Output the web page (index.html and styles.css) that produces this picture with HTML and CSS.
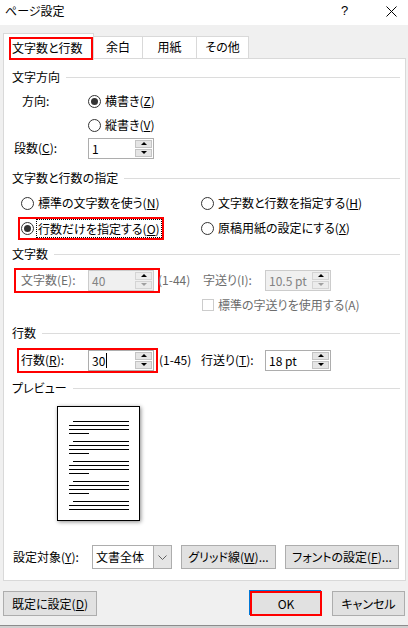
FILE: index.html
```html
<!DOCTYPE html>
<html lang="ja">
<head>
<meta charset="utf-8">
<title>ページ設定</title>
<link rel="stylesheet" href="styles.css">
</head>
<body>
<div class="titlebar">
  <span class="title">ページ設定</span>
  <span class="help">?</span>
  <svg class="close" width="11" height="11" viewBox="0 0 11 11"><path d="M0.5 0.5L10.5 10.5M10.5 0.5L0.5 10.5" stroke="#000" stroke-width="1" fill="none"/></svg>
</div>

<div class="tabs">
  <div class="tab active"><span class="tab-mark">文字数と行数</span></div>
  <div class="tab t2">余白</div>
  <div class="tab t3">用紙</div>
  <div class="tab t4">その他</div>
</div>

<div class="panel">
  <div class="hdr">文字方向</div>
  <div class="row r-dir">
    <span class="lbl w66">方向:</span>
    <span class="opt"><span class="radio on"></span><span>横書き(<u>Z</u>)</span></span>
  </div>
  <div class="row r-vert">
    <span class="opt"><span class="radio"></span><span>縦書き(<u>V</u>)</span></span>
  </div>
  <div class="row r-cols">
    <span class="lbl w74">段数(<u>C</u>):</span>
    <div class="spin"><span class="val">1</span><span class="btns"><span class="sb"><i class="up"></i></span><span class="sb"><i class="dn"></i></span></span></div>
  </div>

  <div class="hdr s2">文字数と行数の指定</div>
  <div class="row r-grid first">
    <span class="col opt"><span class="radio"></span><span>標準の文字数を使う(<u>N</u>)</span></span>
    <span class="opt"><span class="radio"></span><span>文字数と行数を指定する(<u>H</u>)</span></span>
  </div>
  <div class="row r-grid second">
    <span class="col"><span class="mark-radio opt"><span class="radio on"></span><span class="focus">行数だけを指定する(<u>O</u>)</span></span></span>
    <span class="opt"><span class="radio"></span><span>原稿用紙の設定にする(<u>X</u>)</span></span>
  </div>

  <div class="hdr s3">文字数</div>
  <div class="row r-chars">
    <div class="mark mark-chars">
      <span class="lbl dis w67">文字数(E):</span>
      <div class="spin disabled"><span class="val">40</span><span class="btns"><span class="sb"><i class="up"></i></span><span class="sb"><i class="dn"></i></span></span></div>
    </div>
    <span class="range dis r1">(1-44)</span>
    <span class="lbl dis w62">字送り(I):</span>
    <div class="spin disabled"><span class="val">10.5 pt</span><span class="btns"><span class="sb"><i class="up"></i></span><span class="sb"><i class="dn"></i></span></span></div>
  </div>
  <div class="row r-check">
    <span class="check"></span><span class="dis">標準の字送りを使用する(A)</span>
  </div>

  <div class="hdr s4">行数</div>
  <div class="row r-lines">
    <div class="mark mark-lines">
      <span class="lbl w67">行数(<u>R</u>):</span>
      <div class="spin"><span class="val">30<span class="caret"></span></span><span class="btns"><span class="sb"><i class="up"></i></span><span class="sb"><i class="dn"></i></span></span></div>
    </div>
    <span class="range r2">(1-45)</span>
    <span class="lbl w64">行送り(<u>T</u>):</span>
    <div class="spin"><span class="val">18 pt</span><span class="btns"><span class="sb"><i class="up"></i></span><span class="sb"><i class="dn"></i></span></span></div>
  </div>

  <div class="hdr s5">プレビュー</div>
  <div class="page">
    <div class="para"><i class="ln first"></i><i class="ln"></i><i class="ln"></i><i class="ln short"></i></div>
    <div class="para"><i class="ln first"></i><i class="ln"></i><i class="ln"></i><i class="ln short"></i></div>
    <div class="para"><i class="ln first"></i><i class="ln"></i><i class="ln"></i><i class="ln short"></i></div>
    <div class="para"><i class="ln first"></i><i class="ln"></i><i class="ln"></i><i class="ln short"></i></div>
    <div class="para"><i class="ln first"></i><i class="ln"></i><i class="ln"></i></div>
  </div>

  <div class="row r-bottom">
    <span class="lbl w79">設定対象(<u>Y</u>):</span>
    <div class="combo"><span class="combo-val">文書全体</span><span class="combo-btn"><svg width="9" height="5" viewBox="0 0 9 5"><path d="M0.5 0.5L4.5 4.5L8.5 0.5" stroke="#606060" fill="none" stroke-width="1"/></svg></span></div>
    <span class="btn grid-btn">グリッド線(<u>W</u>)...</span>
    <span class="btn font-btn">フォントの設定(<u>F</u>)...</span>
  </div>
</div>

<div class="footer">
  <span class="btn def-btn">既定に設定(<u>D</u>)</span>
  <span class="btn ok-btn">OK</span>
  <span class="btn cancel-btn">キャンセル</span>
</div>
<div class="edge"></div>
</body>
</html>
```

FILE: styles.css
```css
* { box-sizing: border-box; }
html, body { margin: 0; padding: 0; }
body {
  width: 408px;
  height: 628px;
  overflow: hidden;
  background: #f0f0f0;
  font-family: "Noto Sans CJK JP", "Noto Sans", sans-serif;
  font-size: 12px;
  line-height: 20px;
  color: #000;
  font-feature-settings: "palt";
}
u { text-decoration: underline; text-underline-offset: 1px; }
i { font-style: normal; }

.titlebar {
  height: 25px;
  background: #fff;
  display: flex;
  align-items: center;
  padding-left: 5px;
}
.title { flex: 1; margin-top: -3px; }
.help { width: 10px; margin-right: 35px; margin-top: -3px; font-size: 13px; font-family: "Liberation Sans", sans-serif; }
.close { margin-right: 11px; margin-top: -3px; }

.tabs {
  margin-top: 8px;
  height: 25px;
  padding-left: 3px;
  display: flex;
  align-items: flex-end;
}
.tab {
  height: 22px;
  border: 1px solid #d9d9d9;
  border-bottom: none;
  background: #fff;
  text-align: center;
  line-height: 20px;
  margin-left: -1px;
}
.tab.active {
  position: relative;
  z-index: 2;
  margin-left: 0;
  width: 91px;
  height: 27px;
  margin-bottom: -2px;
  padding: 3px 0 0 5px;
  text-align: left;
}
.tab-mark {
  display: block;
  width: 84px;
  height: 23px;
  border: 2px solid #ff0000;
  padding-left: 1px;
  line-height: 18px;
}
.t2 { width: 50px; }
.t3 { width: 55px; }
.t4 { width: 53px; }

.panel {
  margin-left: 3px;
  width: 403px;
  height: 523px;
  background: #fff;
  border: 1px solid #d9d9d9;
  padding: 8px 5px 0 8px;
  display: flex;
  flex-direction: column;
}
.hdr {
  display: flex;
  align-items: center;
  height: 20px;
  white-space: nowrap;
}
.hdr::after {
  content: "";
  flex: 1;
  border-top: 1px solid #dcdcdc;
  margin-left: 6px;
  margin-top: 1px;
}
.s2 { margin-top: 10px; }
.s3 { margin-top: 6px; }
.s4 { margin-top: 8px; }
.s5 { margin-top: 8px; }

.row {
  display: flex;
  align-items: center;
  height: 20px;
  white-space: nowrap;
}
.lbl { display: inline-block; }
.w62 { width: 62px; }
.w64 { width: 64px; }
.w66 { width: 66px; }
.w67 { width: 67px; }
.w74 { width: 74px; }
.w79 { width: 79px; }
.dis { color: #6d6d6d; }

.r-dir { margin-top: 4px; padding-left: 10px; }
.r-vert { margin-top: 4px; padding-left: 76px; }
.r-cols { margin-top: 3px; padding-left: 2px; }
.r-grid { padding-left: 9px; }
.r-grid.first { margin-top: 5px; }
.r-grid.second { margin-top: 5px; padding-left: 6px; }
.col { width: 180px; display: inline-flex; }
.r-grid.second .col { width: 183px; }

.opt { display: inline-flex; align-items: center; gap: 4px; }
.radio {
  width: 13px;
  height: 13px;
  border: 1px solid #333;
  border-radius: 50%;
  background: #fff;
  display: inline-flex;
  align-items: center;
  justify-content: center;
  flex: none;
}
.radio.on::after {
  content: "";
  width: 7px;
  height: 7px;
  border-radius: 50%;
  background: #333;
}
.mark-radio {
  height: 23px;
  width: 146px;
  border: 2px solid #ff0000;
  padding-left: 1px;
  gap: 2px;
  flex: none;
}
.focus {
  border: 1px dotted #000;
  padding: 0 1px;
  line-height: 17px;
}

.spin {
  width: 66px;
  height: 21px;
  border: 1px solid #adadad;
  background: #fff;
  display: flex;
  align-items: center;
  flex: none;
}
.spin.disabled { background: #f0f0f0; border-color: #cccccc; color: #838383; }
.val { flex: 1; padding-left: 3px; line-height: 19px; display: flex; align-items: center; }
.caret { display: inline-block; width: 1px; height: 15px; background: #000; margin-left: 1px; }
.btns {
  display: flex;
  flex-direction: column;
  gap: 1px;
  width: 17px;
  margin-right: 1px;
}
.sb {
  height: 8px;
  background: #e5e5e5;
  border: 1px solid #c4c4c4;
  display: flex;
  align-items: center;
  justify-content: center;
}
.up { width: 0; height: 0; border-left: 3px solid transparent; border-right: 3px solid transparent; border-bottom: 3px solid #000; }
.dn { width: 0; height: 0; border-left: 3px solid transparent; border-right: 3px solid transparent; border-top: 3px solid #000; }
.spin.disabled .dn { border-top-color: #a0a0a0; }
.spin.disabled .sb { background: #ececec; border-color: #d4d4d4; }

.mark {
  display: flex;
  align-items: center;
  border: 2px solid #ff0000;
  flex: none;
}
.r-chars { margin-top: 6px; padding-left: 2px; }
.mark-chars { width: 146px; height: 25px; padding-left: 5px; }
.r1 { margin-left: -2px; width: 45px; }
.r-check { margin-top: 5px; padding-left: 190px; gap: 4px; }
.check { width: 12px; height: 12px; border: 1px solid #cccccc; background: #fff; flex: none; }

.r-lines { margin-top: 7px; padding-left: 5px; }
.mark-lines { width: 141px; height: 25px; padding-left: 2px; }
.r2 { margin-left: 1px; width: 42px; }

.page {
  margin-top: 8px;
  margin-left: 45px;
  width: 83px;
  height: 115px;
  border: 1px solid #000;
  background: #fff;
  box-shadow: 1px 1px 4px rgba(0,0,0,0.45);
  padding: 14px 0 0 11px;
  display: flex;
  flex-direction: column;
  gap: 7px;
  flex: none;
}
.para { display: flex; flex-direction: column; gap: 3px; }
.ln { display: block; height: 1px; background: #000; width: 60px; }
.ln.first { margin-left: 4px; width: 56px; }
.ln.short { width: 20px; }

.r-bottom { margin-top: 24px; height: 24px; padding-left: 1px; }
.combo {
  width: 80px;
  height: 24px;
  border: 1px solid #adadad;
  background: #fff;
  display: flex;
  flex: none;
}
.combo-val { flex: 1; padding-left: 3px; line-height: 22px; }
.combo-btn {
  width: 18px;
  background: #e5e5e5;
  border-left: 1px solid #adadad;
  display: flex;
  align-items: center;
  justify-content: center;
}
.btn {
  height: 24px;
  border: 1px solid #adadad;
  background: #e1e1e1;
  display: inline-flex;
  align-items: center;
  justify-content: center;
  flex: none;
  white-space: nowrap;
}
.grid-btn { width: 95px; margin-left: 9px; }
.font-btn { width: 114px; margin-left: 9px; }

.footer {
  margin-top: 10px;
  height: 25px;
  display: flex;
  padding: 0 3px 0 3px;
}
.footer .btn { height: 25px; }
.def-btn { width: 94px; }
.ok-btn { width: 72px; margin-left: auto; border: 2px solid #ff0000; box-shadow: -1px -1px 0 #0078d7; }
.cancel-btn { width: 73px; margin-left: 10px; }
.edge {
  margin-top: 9px;
  height: 3px;
  border-top: 1px solid #8c8c8c;
  background: #d0d0d0;
}
```
